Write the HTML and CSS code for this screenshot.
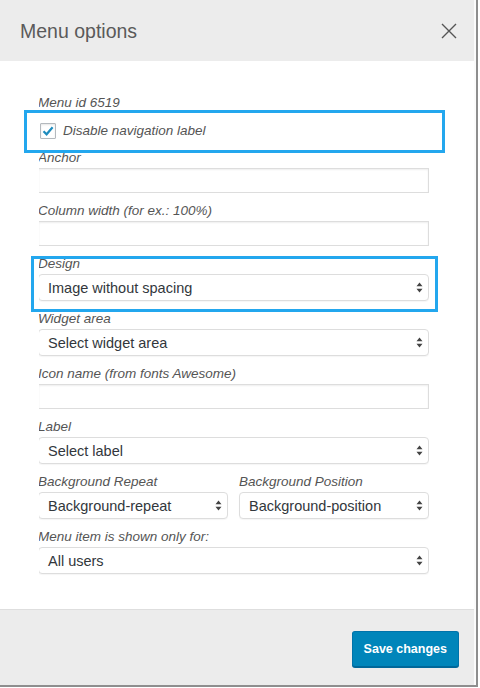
FILE: index.html
```html
<!DOCTYPE html>
<html>
<head>
<meta charset="utf-8">
<link rel="stylesheet" href="styles.css">
</head>
<body>
<div class="frame">
  <div class="modal">
    <div class="header">
      <h1 class="title">Menu options</h1>
      <svg class="close" width="16" height="16" viewBox="0 0 16 16"><path d="M1 1L15 15M15 1L1 15" stroke="#555" stroke-width="1.4" fill="none"/></svg>
    </div>
    <div class="body">
      <div class="clip">
        <div class="inner">
          <div class="label">Menu id 6519</div>
          <div class="check-row">
            <span class="checkbox"><svg width="14" height="14" viewBox="0 0 14 14"><path d="M2.5 7.2L5.6 10.3L11.6 3.2" stroke="#1e8cbe" stroke-width="2.2" fill="none"/></svg></span>
            <span class="check-text">Disable navigation label</span>
          </div>
          <div class="field">
            <div class="label">Anchor</div>
            <input class="input" type="text">
          </div>
          <div class="field">
            <div class="label">Column width (for ex.: 100%)</div>
            <input class="input" type="text">
          </div>
          <div class="field">
            <div class="label">Design</div>
            <div class="select"><span>Image without spacing</span><svg width="7" height="11" viewBox="0 0 7 11"><path d="M3.5 0.5L6.5 4.3H0.5Z M3.5 10.5L6.5 6.7H0.5Z" fill="#444"/></svg></div>
          </div>
          <div class="field">
            <div class="label">Widget area</div>
            <div class="select"><span>Select widget area</span><svg width="7" height="11" viewBox="0 0 7 11"><path d="M3.5 0.5L6.5 4.3H0.5Z M3.5 10.5L6.5 6.7H0.5Z" fill="#444"/></svg></div>
          </div>
          <div class="field">
            <div class="label">Icon name (from fonts Awesome)</div>
            <input class="input" type="text">
          </div>
          <div class="field">
            <div class="label">Label</div>
            <div class="select"><span>Select label</span><svg width="7" height="11" viewBox="0 0 7 11"><path d="M3.5 0.5L6.5 4.3H0.5Z M3.5 10.5L6.5 6.7H0.5Z" fill="#444"/></svg></div>
          </div>
          <div class="field two">
            <div class="col">
              <div class="label">Background Repeat</div>
              <div class="select"><span>Background-repeat</span><svg width="7" height="11" viewBox="0 0 7 11"><path d="M3.5 0.5L6.5 4.3H0.5Z M3.5 10.5L6.5 6.7H0.5Z" fill="#444"/></svg></div>
            </div>
            <div class="col">
              <div class="label">Background Position</div>
              <div class="select"><span>Background-position</span><svg width="7" height="11" viewBox="0 0 7 11"><path d="M3.5 0.5L6.5 4.3H0.5Z M3.5 10.5L6.5 6.7H0.5Z" fill="#444"/></svg></div>
            </div>
          </div>
          <div class="field">
            <div class="label">Menu item is shown only for:</div>
            <div class="select"><span>All users</span><svg width="7" height="11" viewBox="0 0 7 11"><path d="M3.5 0.5L6.5 4.3H0.5Z M3.5 10.5L6.5 6.7H0.5Z" fill="#444"/></svg></div>
          </div>
        </div>
      </div>
    </div>
    <div class="footer">
      <button class="save">Save changes</button>
    </div>
    <div class="highlight hl-1"></div>
    <div class="highlight hl-2"></div>
  </div>
</div>
</body>
</html>
```

FILE: styles.css
```css
html, body {
  margin: 0;
  padding: 0;
  background: #fff;
}
body {
  font-family: "Liberation Sans", Arial, sans-serif;
  width: 480px;
  height: 688px;
  overflow: hidden;
}
.frame {
  width: 476px;
  border-right: 2px solid #8e8e8e;
  border-bottom: 2px solid #8e8e8e;
  background: #fbfbfb;
}
.modal {
  position: relative;
  width: 474px;
  height: 685px;
  display: flex;
  flex-direction: column;
  background: #fff;
}
.header {
  height: 61px;
  flex: none;
  background: #ececec;
  display: flex;
  align-items: center;
  justify-content: space-between;
  padding: 0 17px 0 20px;
  box-sizing: border-box;
}
.title {
  margin: 0;
  font-size: 19.5px;
  font-weight: normal;
  color: #5a5a5a;
  line-height: 24px;
}
.close {
  display: block;
}
.body {
  flex: 1;
  padding: 33px 45px 0 39px;
}
.clip {
  overflow: hidden;
}
.inner {
  margin-left: -1px;
}
.label {
  font-size: 13.5px;
  line-height: 18px;
  font-style: italic;
  color: #555;
  white-space: nowrap;
}
.check-row {
  display: flex;
  align-items: center;
  height: 22px;
  margin: 8px 0 7px 0;
}
.checkbox {
  width: 16px;
  height: 16px;
  box-sizing: border-box;
  border: 1px solid #b4b9be;
  border-radius: 1px;
  box-shadow: inset 0 1px 2px rgba(0,0,0,0.1);
  margin-left: 2px;
  margin-right: 7px;
  display: flex;
  align-items: center;
  justify-content: center;
  background: #fff;
}
.checkbox svg {
  display: block;
}
.check-text {
  font-size: 13.5px;
  line-height: 22px;
  font-style: italic;
  color: #555;
}
.field {
  margin-bottom: 9px;
}
.field .label {
  margin-bottom: 1px;
}
.input {
  display: block;
  width: 100%;
  height: 25px;
  box-sizing: border-box;
  margin: 0;
  border: 1px solid #ddd;
  box-shadow: inset 0 1px 2px rgba(0,0,0,0.07);
  background: #fff;
  padding: 0 8px;
  outline: none;
}
.select {
  height: 27px;
  box-sizing: border-box;
  border: 1px solid #ddd;
  border-radius: 4px;
  background: #fff;
  box-shadow: 0 1px 1px rgba(0,0,0,0.04);
  display: flex;
  align-items: center;
  justify-content: space-between;
  padding: 0 5px 0 9px;
  font-size: 14.5px;
  color: #32373c;
}
.select svg {
  display: block;
}
.two {
  display: grid;
  grid-template-columns: 1fr 1fr;
  column-gap: 11px;
}
.footer {
  height: 76px;
  flex: none;
  box-sizing: border-box;
  background: #ececec;
  border-top: 1px solid #dedede;
  display: flex;
  align-items: center;
  justify-content: flex-end;
  padding: 0 15px 0 0;
}
.save {
  height: 36px;
  padding: 0 11px;
  font-family: "Liberation Sans", Arial, sans-serif;
  font-size: 12.5px;
  font-weight: bold;
  color: #fff;
  background: #0085ba;
  border: 1px solid #0073aa;
  border-bottom-color: #006799;
  border-radius: 3px;
  box-shadow: 0 1px 0 #006799;
  margin-top: 2px;
}
.highlight {
  position: absolute;
  border: 3px solid #23a7ee;
  box-sizing: border-box;
}
.hl-1 {
  left: 24px;
  top: 110px;
  width: 421px;
  height: 43px;
}
.hl-2 {
  left: 31px;
  top: 256px;
  width: 407px;
  height: 56px;
}
```
